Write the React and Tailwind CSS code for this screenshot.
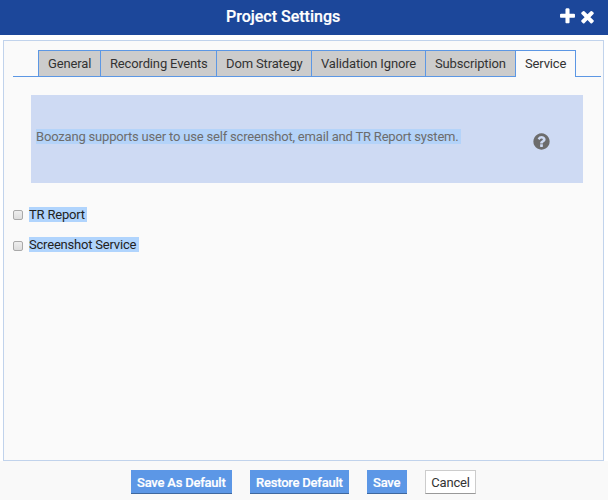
import React from 'react';

const PLUS =
  'M1600 736v192q0 40-28 68t-68 28h-416v416q0 40-28 68t-68 28h-192q-40 0-68-28t-28-68v-416h-416q-40 0-68-28t-28-68v-192q0-40 28-68t68-28h416v-416q0-40 28-68t68-28h192q40 0 68 28t28 68v416h416q40 0 68 28t28 68z';
const TIMES =
  'M1490 1322q0 40-28 68l-136 136q-28 28-68 28t-68-28l-294-294-294 294q-28 28-68 28t-68-28l-136-136q-28-28-28-68t28-68l294-294-294-294q-28-28-28-68t28-68l136-136q28-28 68-28t68 28l294 294 294-294q28-28 68-28t68 28l136 136q28 28 28 68t-28 68l-294 294 294 294q28 28 28 68z';
const QUESTION =
  'M1024 1376v-192q0-14-9-23t-23-9h-192q-14 0-23 9t-9 23v192q0 14 9 23t23 9h192q14 0 23-9t9-23zm256-672q0-88-55.5-163t-138.5-116-170-41q-243 0-371 213-15 24 8 42l132 100q7 6 19 6 16 0 25-12 53-68 86-92 34-24 86-24 48 0 85.5 26t37.5 59q0 38-20 61t-68 45q-63 28-115.500 86.500t-52.500 125.500v36q0 14 9 23t23 9h192q14 0 23-9t9-23q0-19 21.500-49.500t54.500-49.500q32-18 49-28.500t46-35 44.500-48 28-60.500 12.500-81zm384 192q0 209-103 385.500t-279.500 279.500-385.500 103-385.500-103-279.500-279.500-103-385.500 103-385.500 279.500-279.500 385.500-103 385.500 103 279.500 279.500 103 385.500z';

function Icon({ path, className }) {
  return (
    <svg viewBox="0 0 1792 1792" fill="currentColor" className={`h-[19px] w-[19px] shrink-0 ${className || ''}`}>
      <path d={path} />
    </svg>
  );
}

const TABS = [
  { label: 'General', width: 'w-[62px]' },
  { label: 'Recording Events', width: 'w-[116px]' },
  { label: 'Dom Strategy', width: 'w-[95px]' },
  { label: 'Validation Ignore', width: 'w-[114px]' },
  { label: 'Subscription', width: 'w-[90px]' },
  { label: 'Service', width: 'w-[61px]', active: true },
];

function Tab({ label, width, active }) {
  return (
    <div
      className={`${width} flex h-[27px] border-t border-l border-[#5c97e4] pt-[4px] pl-[9px] leading-[18px] tracking-[-0.15px] whitespace-nowrap ${
        active ? 'border-r bg-[#fafafa]' : 'border-b bg-[#cccccc]'
      }`}
    >
      {label}
    </div>
  );
}

function Option({ label, width, boxClass, className }) {
  return (
    <label className={`flex h-[15px] text-[#222222] ${className}`}>
      <span
        className={`${boxClass} h-[10px] w-[10px] shrink-0 rounded-[2px] border border-[#a9a9a9] bg-linear-to-b from-[#eeeeee] to-[#dddddd]`}
      />
      <span className={`${width} ml-[6px] bg-[#b0d4fd] leading-[15px] tracking-[-0.2px] whitespace-nowrap`}>{label}</span>
    </label>
  );
}

const PRIMARY =
  'h-[24px] border-b border-[#3f689e] bg-[#5c97e6] pl-[6px] text-left font-medium leading-[25px] tracking-[-0.22px] whitespace-nowrap text-white [-webkit-text-stroke:0.2px_white]';

export default function App() {
  return (
    <div className="flex h-[500px] w-[608px] flex-col overflow-hidden bg-white font-['Roboto',sans-serif] text-[13px] text-[#333333]">
      <header className="flex h-[35px] shrink-0 bg-[#1c479a] text-white">
        <h1 className="ml-[226px] w-[332px] text-[16px] font-medium leading-[33px] [-webkit-text-stroke:0.2px_white]">
          Project Settings
        </h1>
        <Icon path={PLUS} className="mt-[7px]" />
        <Icon path={TIMES} className="mt-[7px] ml-[1px]" />
      </header>

      <main className="mt-[5px] ml-[3px] flex h-[421px] w-[601px] shrink-0 flex-col border border-[#c1d3ec] bg-[#fafafa]">
        <nav className="mt-[9px] ml-[9px] flex h-[27px] w-[588px]">
          <div className="w-[25px] border-b border-[#5c97e4]" />
          {TABS.map((tab) => (
            <Tab key={tab.label} {...tab} />
          ))}
          <div className="flex-1 border-b border-[#5c97e4]" />
        </nav>

        <section className="mt-[18px] ml-[27px] flex h-[88px] w-[552px] bg-[#cedaf3] text-[#6c6c6c]">
          <p className="mt-[34px] ml-[5px] h-[15px] w-[425px] bg-[#b4d3f9] leading-[15px] tracking-[-0.19px] whitespace-nowrap">
            Boozang supports user to use self screenshot, email and TR Report system.
          </p>
          <Icon path={QUESTION} className="mt-[37px] ml-[71px]" />
        </section>

        <Option label="TR Report" width="w-[58px]" boxClass="mt-[3px]" className="mt-[24px] ml-[9px]" />
        <Option label="Screenshot Service" width="w-[110px]" boxClass="mt-[4px]" className="mt-[15px] ml-[9px]" />
      </main>

      <footer className="flex flex-1 bg-[#f9f9f9] pt-[9px] pl-[131px]">
        <button className={`${PRIMARY} w-[101px]`}>Save As Default</button>
        <button className={`${PRIMARY} ml-[18px] w-[99px]`}>Restore Default</button>
        <button className={`${PRIMARY} ml-[18px] w-[40px]`}>Save</button>
        <button className="ml-[18px] h-[24px] w-[51px] border border-[#cccccc] border-b-[#999999] bg-white text-center leading-[23px] tracking-[-0.15px]">
          Cancel
        </button>
      </footer>
    </div>
  );
}
